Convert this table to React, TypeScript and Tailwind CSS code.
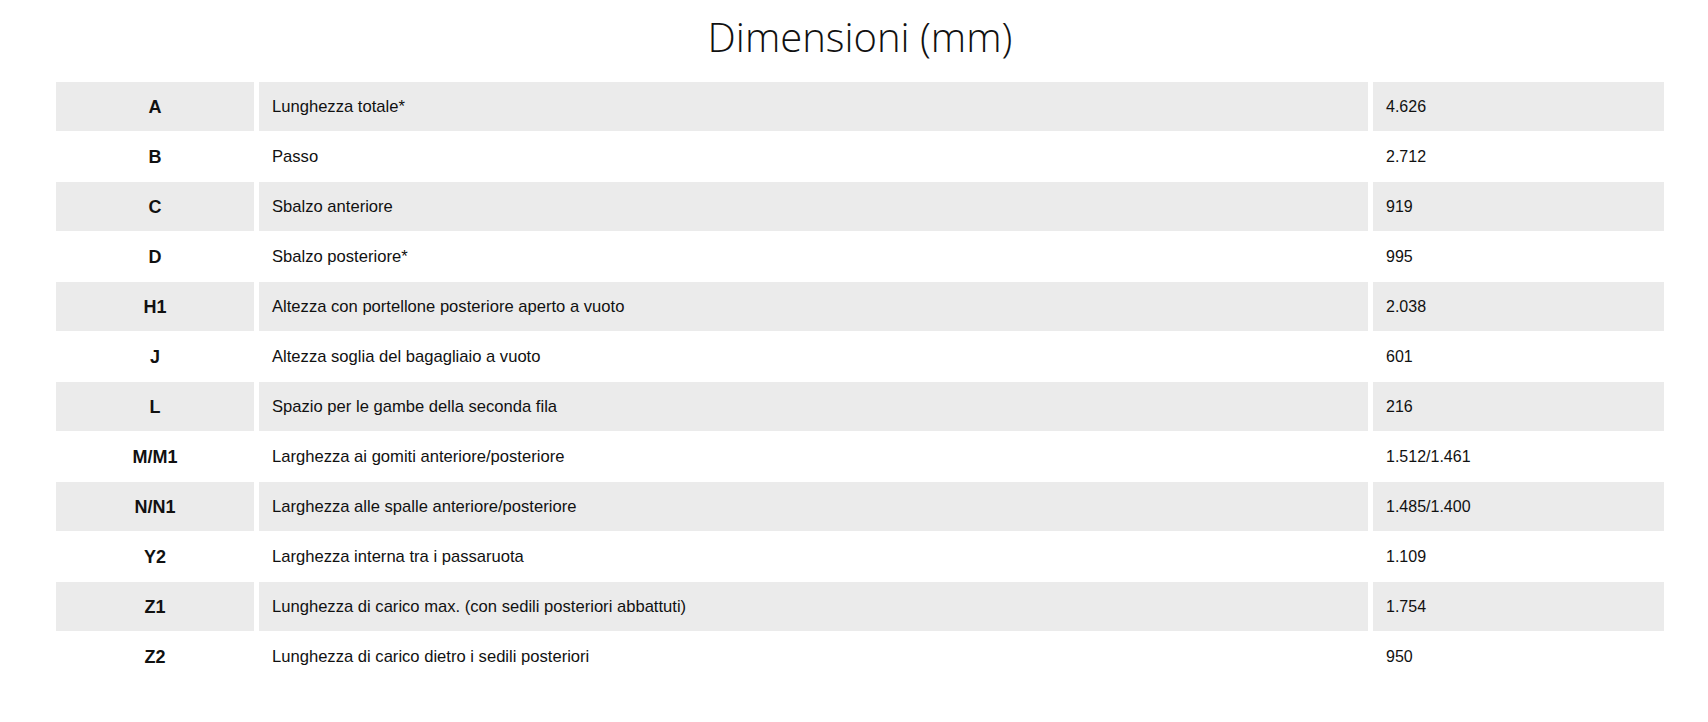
import React from "react";

const rows: [string, string, string][] = [
  ["A", "Lunghezza totale*", "4.626"],
  ["B", "Passo", "2.712"],
  ["C", "Sbalzo anteriore", "919"],
  ["D", "Sbalzo posteriore*", "995"],
  ["H1", "Altezza con portellone posteriore aperto a vuoto", "2.038"],
  ["J", "Altezza soglia del bagagliaio a vuoto", "601"],
  ["L", "Spazio per le gambe della seconda fila", "216"],
  ["M/M1", "Larghezza ai gomiti anteriore/posteriore", "1.512/1.461"],
  ["N/N1", "Larghezza alle spalle anteriore/posteriore", "1.485/1.400"],
  ["Y2", "Larghezza interna tra i passaruota", "1.109"],
  ["Z1", "Lunghezza di carico max. (con sedili posteriori abbattuti)", "1.754"],
  ["Z2", "Lunghezza di carico dietro i sedili posteriori", "950"],
];

export default function App() {
  return (
    <div className="min-h-[722px] bg-white pl-[56px] pr-[44px] text-black" style={{ fontFamily: "'Liberation Sans', Arial, sans-serif" }}>
      <h1 className="h-[82px] pt-[17px] text-center text-[40px] font-light leading-none text-[#111]" style={{ fontFamily: "'Open Sans', sans-serif" }}>
        Dimensioni (mm)
      </h1>
      <div className="grid grid-cols-[198px_1fr_291px] gap-x-[5px] gap-y-[1px]">
        {rows.map(([k, label, val], i) => {
          const bg = i % 2 === 0 ? "bg-[#ebebeb]" : "bg-white";
          return (
            <React.Fragment key={k}>
              <div className={`${bg} flex h-[49px] items-center justify-center pt-[2px] text-[18px] font-bold text-[#111]`}>{k}</div>
              <div className={`${bg} flex h-[49px] items-center px-[13px] pt-[2px] text-[16.6px] text-[#111]`}>{label}</div>
              <div className={`${bg} flex h-[49px] items-center px-[13px] pt-[1px] text-[16px] text-[#111]`}>{val}</div>
            </React.Fragment>
          );
        })}
      </div>
    </div>
  );
}
